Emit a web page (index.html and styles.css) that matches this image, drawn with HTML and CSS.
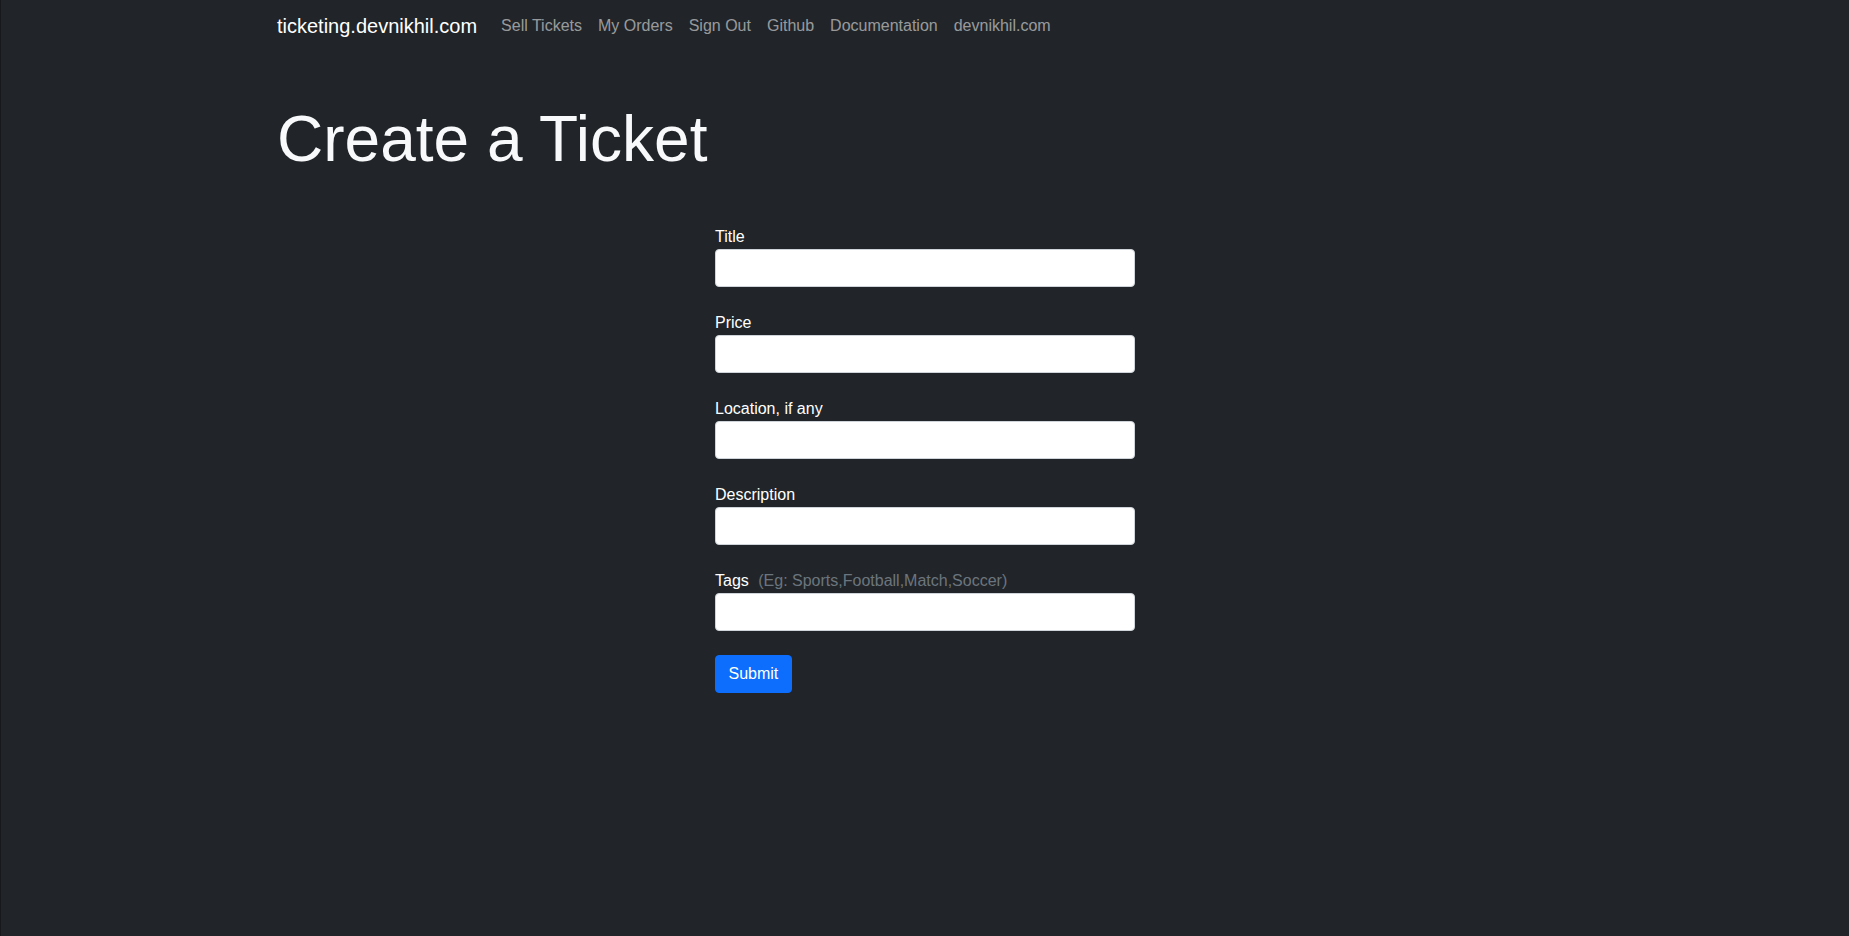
FILE: index.html
```html
<!DOCTYPE html>
<html lang="en">
<head>
<meta charset="utf-8">
<title>Create a Ticket</title>
<link rel="stylesheet" href="styles.css">
</head>
<body>
<nav class="navbar">
  <div class="container nav-inner">
    <a class="brand" href="#">ticketing.devnikhil.com</a>
    <ul class="nav-links">
      <li><a href="#">Sell Tickets</a></li>
      <li><a href="#">My Orders</a></li>
      <li><a href="#">Sign Out</a></li>
      <li><a href="#">Github</a></li>
      <li><a href="#">Documentation</a></li>
      <li><a href="#">devnikhil.com</a></li>
    </ul>
  </div>
</nav>
<main class="container">
  <h1 class="page-title">Create a Ticket</h1>
  <form class="ticket-form">
    <div class="field">
      <label class="field-label">Title</label>
      <input class="field-input" type="text">
    </div>
    <div class="field">
      <label class="field-label">Price</label>
      <input class="field-input" type="text">
    </div>
    <div class="field">
      <label class="field-label">Location, if any</label>
      <input class="field-input" type="text">
    </div>
    <div class="field">
      <label class="field-label">Description</label>
      <input class="field-input" type="text">
    </div>
    <div class="field">
      <label class="field-label">Tags <span class="muted">(Eg: Sports,Football,Match,Soccer)</span></label>
      <input class="field-input" type="text">
    </div>
    <button class="btn-submit" type="button">Submit</button>
  </form>
</main>
</body>
</html>
```
FILE: styles.css
```css
* { box-sizing: border-box; }
html { background: #212529; }
body {
  margin: 0;
  min-height: 100vh;
  background: #212529;
  color: #f8f9fa;
  font-family: "Liberation Sans", Arial, sans-serif;
  font-size: 16px;
  line-height: 24px;
  border-left: 1px solid #16181b;
}
.container {
  width: 1320px;
  margin: 0 auto;
  padding: 0 12px;
}
.navbar { padding: 6px 0 4px; }
.nav-inner { display: flex; align-items: center; }
.brand {
  color: #fff;
  font-size: 20px;
  line-height: 30px;
  padding: 5px 0;
  margin-right: 16px;
  text-decoration: none;
}
.nav-links {
  display: flex;
  list-style: none;
  margin: 0;
  padding: 0;
}
.nav-links a {
  display: block;
  padding: 8px;
  color: rgba(255, 255, 255, 0.55);
  text-decoration: none;
}
.page-title {
  margin: 51px 0 0;
  font-size: 64px;
  line-height: 1.2;
  font-weight: 300;
  color: #f8f9fa;
}
.ticket-form {
  width: 420px;
  margin: 47px auto 0;
}
.field { margin-bottom: 24px; }
.field-label { display: block; color: #fff; }
.muted { color: #6c757d; margin-left: 5px; }
.field-input {
  display: block;
  width: 100%;
  height: 38px;
  padding: 6px 12px;
  font: inherit;
  background: #fff;
  border: 1px solid #ced4da;
  border-radius: 4px;
}
.btn-submit {
  height: 38px;
  padding: 6px 12.5px;
  font: inherit;
  color: #fff;
  background: #0d6efd;
  border: 1px solid #0d6efd;
  border-radius: 4px;
}
```
